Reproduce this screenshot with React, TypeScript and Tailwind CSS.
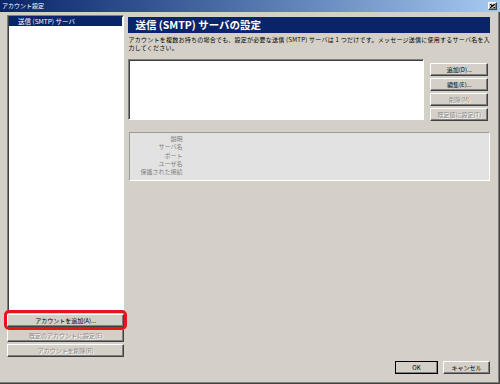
import clsx from "clsx";

const raised =
  "border border-t-white border-l-white border-r-[#404040] border-b-[#404040] shadow-[inset_-1px_-1px_0_#808080]";
const sunken =
  "border border-t-[#808080] border-l-[#808080] border-r-white border-b-white shadow-[inset_1px_1px_0_#404040]";

function Btn({
  label,
  disabled,
  className,
}: {
  label: string;
  disabled?: boolean;
  className?: string;
}) {
  return (
    <div
      className={clsx(
        "flex h-[13px] items-center justify-center bg-[#d4d0c8] text-[6px] leading-none whitespace-nowrap",
        raised,
        disabled ? "text-[#8a8a8a] [text-shadow:1px_1px_0_#fff]" : "text-black",
        className
      )}
    >
      {label}
    </div>
  );
}

const labels = ["説明", "サーバ名", "ポート", "ユーザ名", "保護された接続"];

export default function App() {
  return (
    <div className="flex h-[384px] w-[500px] flex-col bg-[#d4d0c8] font-['Noto_Sans_CJK_JP','MS_UI_Gothic',sans-serif] shadow-[inset_-1px_-1px_0_#404040,inset_-2px_-2px_0_#808080]">
      {/* title bar */}
      <div className="flex h-[12px] items-center justify-between bg-gradient-to-r from-[#0a246a] to-[#a6caf0] pl-[2px] pr-[3px]">
        <span className="text-[6px] leading-none text-white">アカウント設定</span>
        <div className={clsx("flex h-[8px] w-[9px] items-center justify-center bg-[#d4d0c8]", raised)}>
          <svg width="5" height="4" viewBox="0 0 5 4">
            <path d="M0 0L5 4M5 0L0 4" stroke="#000" strokeWidth="1.2" />
          </svg>
        </div>
      </div>

      {/* body */}
      <div className="flex flex-1 gap-[4px] pb-[10px] pl-[7px] pr-[10px] pt-[3px]">
        {/* left column */}
        <div className="flex w-[118px] flex-col gap-[2px] pb-[17px]">
          <div className={clsx("flex-1 bg-white", sunken)}>
            <div className="mx-[1px] flex h-[10px] items-center bg-[#0a246a] pl-[9px] text-[6.5px] leading-none text-white whitespace-nowrap">
              送信 (SMTP) サーバ
            </div>
          </div>
          <div className="relative">
            <Btn label="アカウントを追加(A)..." />
            <div className="pointer-events-none absolute -bottom-[3px] -left-[3px] -right-[3px] -top-[4px] rounded-[5px] border-[3px] border-[#e8141c]" />
          </div>
          <Btn label="既定のアカウントに設定(E)" disabled />
          <Btn label="アカウントを削除(R)" disabled />
        </div>

        {/* right column */}
        <div className="flex flex-1 flex-col pt-[2px]">
          <div className="flex h-[16px] items-center bg-[#0a246a] pl-[7px] text-[10.5px] font-bold leading-none text-white whitespace-nowrap">
            送信 (SMTP) サーバの設定
          </div>
          <p className="mt-[3px] text-[6px] leading-[7.5px] tracking-[0.25px] text-black whitespace-nowrap">
            アカウントを複数お持ちの場合でも、設定が必要な送信 (SMTP) サーバは 1 つだけです。メッセージ送信に使用するサーバ名を入
            <br />
            力してください。
          </p>

          <div className="mt-[8px] flex gap-[6px]">
            <div className={clsx("h-[61px] w-[296px] bg-white", sunken)} />
            <div className="flex w-[58px] flex-col gap-[2px] pt-[4px]">
              <Btn label="追加(D)..." />
              <Btn label="編集(E)..." />
              <Btn label="削除(M)" disabled />
              <Btn label="既定値に設定(T)" disabled />
            </div>
          </div>

          <div className="ml-[1px] mt-[11px] flex h-[49px] border border-t-[#9a9a9a] border-l-[#9a9a9a] border-r-white border-b-white bg-[#e2e2e2] pt-[2px]">
            <div className="flex w-[52px] flex-col items-end text-[6px] leading-[8.3px] text-[#808080] whitespace-nowrap">
              {labels.map((l) => (
                <span key={l}>{l}</span>
              ))}
            </div>
          </div>

          <div className="flex-1" />

          <div className="flex justify-end gap-[5px]">
            <Btn label="OK" className="w-[43px] outline outline-1 outline-black -outline-offset-1" />
            <Btn label="キャンセル" className="w-[47px]" />
          </div>
        </div>
      </div>
    </div>
  );
}
